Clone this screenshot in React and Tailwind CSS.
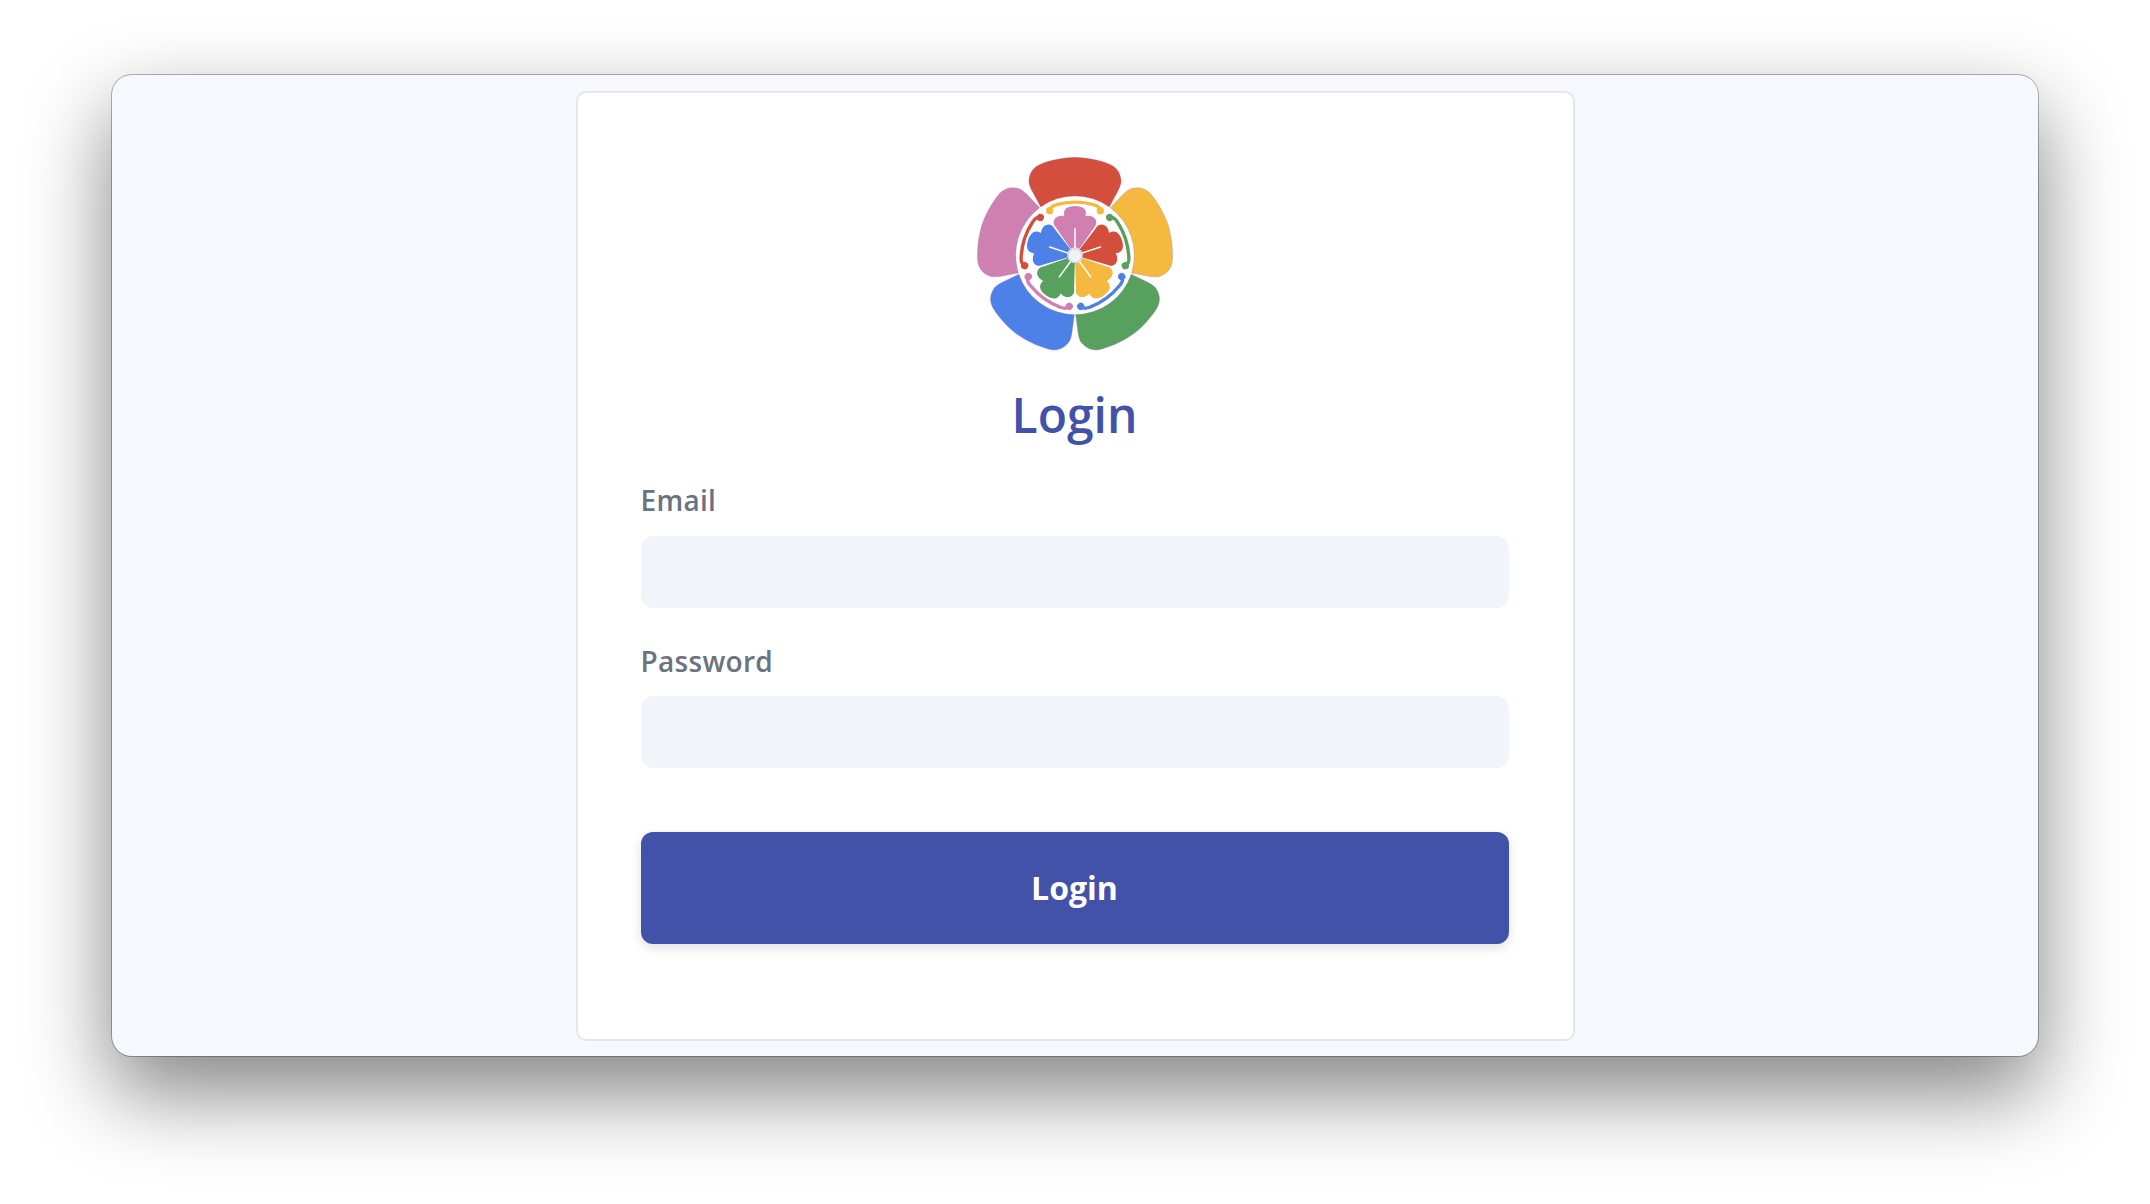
const PETAL = "M272,200 L245,150 C238,135 236,128 237,118 C239,95 252,78 275,70 C310,57 345,52 375,51 C405,52 440,57 475,70 C498,78 511,95 513,118 C514,128 512,135 505,150 L478,200 A178,178 0 0 0 272,200 Z";
const SMALL = "M362,326 L318,262 C302,246 314,222 343,227 C338,208 350,197 375,197 C400,197 412,208 407,227 C436,222 448,246 432,262 L388,326 C380,320 370,320 362,326 Z";
const OUTER = ["#d34e3d", "#f5b93f", "#57a05d", "#4e81e8", "#cf80b1"];
const INNER = ["#cf80b1", "#d34e3d", "#f5b93f", "#57a05d", "#4e81e8"];
const ARC = ["#f5b93f", "#57a05d", "#4e81e8", "#cf80b1", "#d34e3d"];

function Logo() {
  return (
    <svg viewBox="75 47 600 590" width="200" height="196.67" className="block">
      {[0, 1, 2, 3, 4].map((i) => (
        <g key={i} transform={`rotate(${i * 72} 375 345)`}>
          <path d={PETAL} fill={OUTER[i]} stroke="#8f7fae" strokeWidth="1.5" strokeOpacity="0.6" />
          <path d={SMALL} fill={INNER[i]} />
          <path d="M375,265 L375,326" stroke="#ffffff" strokeWidth="4.5" strokeLinecap="round" fill="none" />
          <path d="M299,212 C301,198 310,196 320,193 Q375,178 430,193 C440,196 449,198 451,212" stroke={ARC[i]} strokeWidth="10" fill="none" strokeLinecap="round" />
          <circle cx="299" cy="211" r="11" fill={ARC[i]} />
          <circle cx="451" cy="211" r="11" fill={ARC[i]} />
        </g>
      ))}
      <circle cx="375" cy="346" r="21" fill="#f0f2f9" stroke="#a9a3c9" strokeWidth="2" />
    </svg>
  );
}

export default function App() {
  return (
    <div className="min-h-[1204px] bg-white pt-[75px] pl-[112px] font-['Open_Sans','Liberation_Sans',sans-serif]">
      <div className="w-[1926px] h-[981px] rounded-[20px] bg-[#f7f8fd] flex flex-col items-center pt-[16px] shadow-[0_0_0_1px_rgba(0,0,0,0.28),0_36px_84px_2px_rgba(0,0,0,0.48)]">
        <div className="w-[999px] h-[950px] rounded-[10px] border-2 border-[#e4e6ef] bg-white pl-[63px] pr-[64px] pt-[63px] flex flex-col">
          <div className="flex justify-center">
            <Logo />
          </div>
          <h1 className="mt-[34px] text-center text-[48px] leading-[56px] font-semibold text-[#4152a8]">Login</h1>
          <form className="flex flex-col">
            <label className="mt-[40px] text-[28px] leading-[34px] font-semibold tracking-[0.3px] text-[#6b7280]">Email</label>
            <input className="mt-[19px] h-[72px] w-full rounded-[12px] bg-[#f1f4f9]" />
            <label className="mt-[36px] text-[28px] leading-[34px] font-semibold tracking-[0.3px] text-[#6b7280]">Password</label>
            <input className="mt-[18px] h-[72px] w-full rounded-[12px] bg-[#f1f4f9]" />
            <button type="button" className="mt-[64px] h-[112px] w-full rounded-[12px] bg-[#4152a8] text-white text-[32px] font-bold shadow-[0_4px_12px_rgba(0,0,0,0.12)]">Login</button>
          </form>
        </div>
      </div>
    </div>
  );
}
